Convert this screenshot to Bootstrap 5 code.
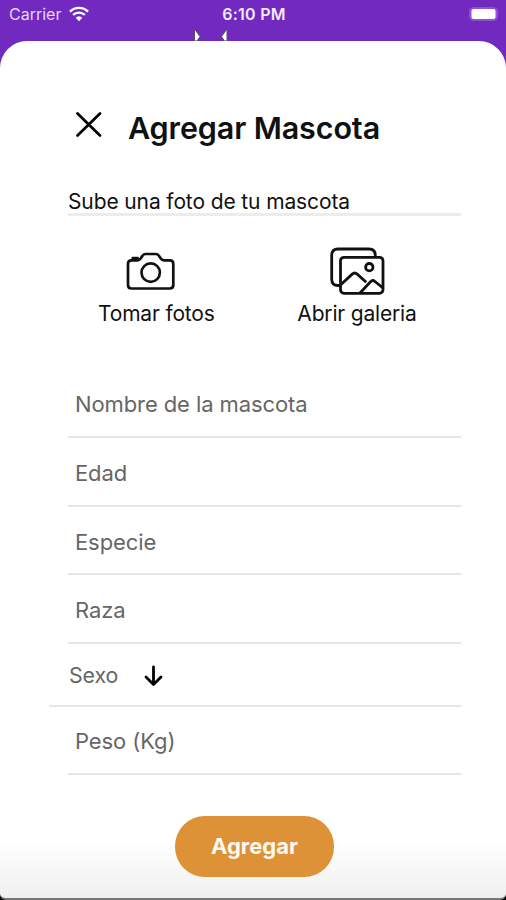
<!DOCTYPE html>
<html lang="es">
<head>
<meta charset="utf-8">
<meta name="viewport" content="width=device-width, initial-scale=1">
<title>Agregar Mascota</title>
<link href="https://cdn.jsdelivr.net/npm/bootstrap@5.3.0/dist/css/bootstrap.min.css" rel="stylesheet">
<style>
body{font-family:Inter,"Liberation Sans",sans-serif;background:#7229c0;color:#111;line-height:1}
.screen{width:506px;height:900px;background:linear-gradient(#7229c0 0,#7229c0 800px,#000 800px)}
.status{height:41px;color:#e6d5f6;font-size:16px;padding:5px 7px 0 9px}
.status>div{height:17px}
.clock{font-size:16px;letter-spacing:.25px;color:#f3eafb}
.notch{top:30px;left:191px}
.sheet{height:859px;background:linear-gradient(#fff 0,#fff 800px,#f0f0f0 855px);border-radius:27px 27px 6px 6px;border-bottom:2px solid #777;padding:0 45px 0 68px}
.heading{height:133px;padding:69px 0 0 7px}
.heading h1{font-size:30.5px;font-weight:600;line-height:36px;letter-spacing:-.12px;margin-left:26px}
.subhead{height:42px;font-size:21px;letter-spacing:-.12px;line-height:26px;padding-top:15px;border-bottom:3px solid #ececec;white-space:nowrap}
.choices{height:153px;padding-top:30px}
.choices .btn{font-size:21px;letter-spacing:-.18px;line-height:26px;height:81px;color:#111;white-space:nowrap}
.choices svg{display:block;margin:0 auto 5px}
.opt-a{width:116px;margin-left:30px}
.opt-a svg{transform:translateX(-5px)}
.opt-b{width:120px;margin-left:83px}
.field{color:#666;font-size:22px;letter-spacing:-.1px;border-bottom:2px solid #e6e6e6;height:68.75px;padding:21px 7px 0;line-height:28px;white-space:nowrap}
.field.picker{height:62.5px;margin-left:-19px;padding:17px 0 0 20px;font-size:21.300px}
.field.last-field{padding-top:20px}
.save{width:159px;height:61px;background:#de9238;color:#fffaf0;font-size:22px;font-weight:700;border-radius:30px;margin:41px 0 0 107px}
.save:hover{background:#c98230;color:#fff}
</style>
</head>
<body>
<div class="screen overflow-hidden position-relative">
  <header class="status row g-0">
    <div class="col d-flex align-items-center gap-2"><span>Carrier</span>
      <svg width="20" height="16" viewBox="0 0 21 16" fill="none" stroke="#fff" stroke-width="2.5"><path d="M1 5.500a13.500 13.500 0 0 1 19 0M4.300 9a9 9 0 0 1 12.400 0"/><path d="M7 11.900a5.200 5.200 0 0 1 7 0L10.500 15.500Z" fill="#fff" stroke="none"/></svg>
    </div>
    <div class="col-auto clock fw-semibold d-flex align-items-center"><span>6:10 PM</span></div>
    <div class="col d-flex align-items-center justify-content-end">
      <svg width="31" height="17" viewBox="0 0 31 17"><rect x="1.500" y="2.500" width="28" height="13" rx="4" fill="#8e54cf" stroke="#8e54cf"/><rect x="3.500" y="4" width="24" height="10" rx="2" fill="#fff"/></svg>
    </div>
  </header>
  <svg class="notch position-absolute" width="38" height="11" viewBox="0 0 38 11"><path d="M3.500-1v12h2.500l3-4.500ZM36-1v12h-2.500l-3-4.500Z" fill="#fff" stroke="#555" stroke-width="1"/></svg>
  <main class="sheet">
    <div class="heading d-flex align-items-start">
      <svg width="27" height="27" viewBox="0 0 27 27" fill="none" stroke="#000" stroke-width="2.700" stroke-linecap="round"><path d="M2.500 3.500 25 25.500M25 3.500 2.500 25.500"/></svg>
      <h1 class="mb-0 text-nowrap">Agregar Mascota</h1>
    </div>
    <div class="subhead">Sube una foto de tu mascota</div>
    <div class="choices d-flex">
      <button class="btn border-0 p-0 opt-a" type="button">
        <svg width="50" height="50" viewBox="0 0 50 50" fill="none" stroke="#111" stroke-width="2.700" stroke-linejoin="round"><path d="M5.500 14.300h6c1.600 0 2.500-.8 3.300-2l1.700-2.600q1.200-1.700 3.200-1.700h10q2 0 3.200 1.700l1.700 2.600c.8 1.200 1.700 2 3.300 2h5.900q3.500 0 3.500 3.500v21.200q0 3.500-3.500 3.500H5.500Q2 42.500 2 39V17.800q0-3.500 3.500-3.500Z"/><circle cx="24.700" cy="26.600" r="9.200"/><path d="M6.800 14v-2h4.800v2" fill="#111"/></svg>
        <span>Tomar fotos</span>
      </button>
      <button class="btn border-0 p-0 opt-b" type="button">
        <svg width="56" height="50" viewBox="0 0 56 50" fill="none" stroke="#111" stroke-width="2.800" stroke-linejoin="round"><path d="M11 39.500H9q-6.300 0-6.300-6.300V9.300Q2.700 3 9 3h31q6.300 0 6.300 6.300v1.500"/><rect x="11.500" y="11.300" width="42.500" height="36" rx="3.500"/><circle cx="40.300" cy="21.200" r="3.700"/><path d="m12 38.500 11.200-10.400q2.500-2.200 5 0l9 8.200M31 47l10.500-11.300q2.200-2.200 4.500-.2l8 6.500"/></svg>
        <span>Abrir galeria</span>
      </button>
    </div>
    <div class="field">Nombre de la mascota</div>
    <div class="field">Edad</div>
    <div class="field">Especie</div>
    <div class="field">Raza</div>
    <div class="field picker d-flex">Sexo
      <svg class="ms-4 mt-1" width="22" height="22" viewBox="0 0 22 22" fill="none" stroke="#000" stroke-width="2.800" stroke-linecap="round" stroke-linejoin="round"><path d="M11.500 2v17M4 12l7.500 7.500L19 12"/></svg>
    </div>
    <div class="field last-field">Peso (Kg)</div>
    <div><button class="btn border-0 p-0 save" type="button">Agregar</button></div>
  </main>
</div>
<script src="https://cdn.jsdelivr.net/npm/bootstrap@5.3.0/dist/js/bootstrap.bundle.min.js"></script>
</body>
</html>
